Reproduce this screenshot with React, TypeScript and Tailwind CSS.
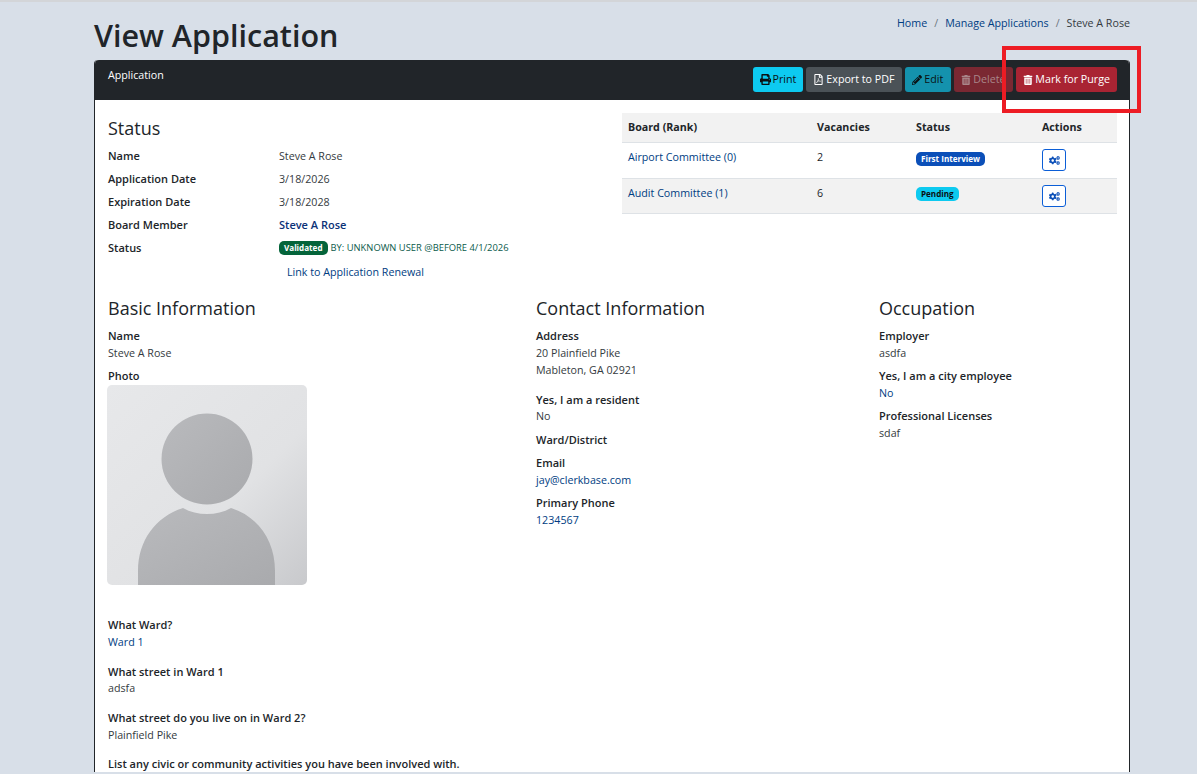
import React from "react";
import { FaPrint, FaRegFilePdf, FaPencilAlt, FaTrashAlt, FaCogs } from "react-icons/fa";

const LINK = "text-[#003d82]";

function Field({ label, value, className = "", valueClass = "" }: { label: string; value?: React.ReactNode; className?: string; valueClass?: string }) {
  return (
    <div className={className}>
      <div className="font-semibold text-[#212529] leading-[17px]">{label}</div>
      {value !== undefined && <div className={`pt-px text-[10.7px] leading-[16px] ${valueClass}`}>{value}</div>}
    </div>
  );
}

function StatusRow({ label, children }: { label: string; children: React.ReactNode }) {
  return (
    <div className="flex h-[23px] items-start leading-[17px]">
      <div className="w-[171px] font-semibold text-[#212529]">{label}</div>
      <div className="flex-1 pt-px text-[10.7px]">{children}</div>
    </div>
  );
}

function Btn({ icon, label, className }: { icon: React.ReactNode; label: string; className: string }) {
  return (
    <div className={`flex h-[25px] items-center gap-[2px] rounded-[3px] px-[7px] text-[10.7px] ${className}`}>
      {icon}
      <span>{label}</span>
    </div>
  );
}

function BoardRow({ name, vacancies, badge, badgeClass, bg, h, badgeTop }: { name: string; vacancies: string; badge: string; badgeClass: string; bg: string; h: string; badgeTop: string }) {
  return (
    <div className={`flex border-b border-[#dee2e6] ${bg} ${h}`}>
      <div className={`w-[189px] pl-[6px] pt-[6px] text-[10.7px] leading-[17px] ${LINK}`}>{name}</div>
      <div className="w-[99px] pl-[6px] pt-[6px] text-[10.7px] leading-[17px] text-[#212529]">{vacancies}</div>
      <div className={`w-[126px] pl-[6px] ${badgeTop}`}>
        <div className={`w-fit rounded-[5px] px-[5px] text-[8.1px] font-bold leading-[14px] ${badgeClass}`}>{badge}</div>
      </div>
      <div className="flex-1 pl-[6px] pt-[6px]">
        <div className="flex h-[22px] w-[24px] items-center justify-center rounded-[3px] border border-[#0b5ed7] bg-white text-[#0b4fb8]">
          <FaCogs size={11} />
        </div>
      </div>
    </div>
  );
}

function Avatar() {
  return (
    <svg width="200" height="200" viewBox="0 0 200 200" className="block rounded-[5px]">
      <defs>
        <linearGradient id="bg" x1="0" y1="0" x2="1" y2="1">
          <stop offset="0" stopColor="#e7e8ea" />
          <stop offset="0.6" stopColor="#e1e2e4" />
          <stop offset="1" stopColor="#c8c9cc" />
        </linearGradient>
        <linearGradient id="fg" x1="0" y1="0" x2="1" y2="1">
          <stop offset="0" stopColor="#b9babd" />
          <stop offset="1" stopColor="#a9aaad" />
        </linearGradient>
      </defs>
      <rect width="200" height="200" fill="url(#bg)" />
      <circle cx="100" cy="74" r="45.5" fill="url(#fg)" />
      <path d="M31 200 V186 C31 156 48 132 76 123 C 90 131 110 131 124 123 C 152 132 168 156 168 186 V200 Z" fill="url(#fg)" />
    </svg>
  );
}

export default function App() {
  return (
    <div className="relative h-[774px] w-full overflow-hidden bg-[#d8dfe8] text-[11px] text-[#343a40]" style={{ fontFamily: '"Open Sans", "Noto Sans", sans-serif' }}>
      <div className="h-[2px] bg-[#d3d5d8]" />
      <div className="ml-[94px] w-[1036px]">
        <div className="flex h-[58px] items-start justify-between">
          <h1 className="mt-[13px] text-[30.5px] font-semibold leading-[40px] text-[#212529]">View Application</h1>
          <div className="mt-[14px] flex gap-[7px] text-[10.7px] leading-[15px] text-[#6c757d]">
            <span className={LINK}>Home</span>
            <span>/</span>
            <span className={LINK}>Manage Applications</span>
            <span>/</span>
            <span className="text-[#343a40]">Steve A Rose</span>
          </div>
        </div>

        <div className="rounded-t-[4px] border-x border-[#212529] bg-white">
          <div className="flex h-[40px] items-start justify-between rounded-t-[4px] bg-[#212529] pl-[13px] pr-[12px]">
            <div className="pt-[7px] text-[10.7px] leading-[16px] text-white">Application</div>
            <div className="flex items-center gap-[3px] pt-[7px]">
              <Btn className="bg-[#0dcaf0] text-[#0b1013]" icon={<FaPrint size={11} />} label="Print" />
              <Btn className="w-[96px] bg-[#4b5257] text-white" icon={<FaRegFilePdf size={11} />} label="Export to PDF" />
              <Btn className="w-[46px] bg-[#1492ad] text-[#0a1215]" icon={<FaPencilAlt size={10} />} label="Edit" />
              <Btn className="w-[59px] overflow-hidden bg-[#7a2832] text-[#a9868a]" icon={<FaTrashAlt size={10} />} label="Delete" />
              <Btn className="bg-[#a92433] text-white" icon={<FaTrashAlt size={10} />} label="Mark for Purge" />
            </div>
          </div>

          <div className="flex pl-[13px] pr-[12px] pt-[13px]">
            <div className="w-[514px]">
              <h2 className="mb-[7px] mt-[3px] text-[18px] font-normal leading-[24px] text-[#212529]">Status</h2>
              <StatusRow label="Name">Steve A Rose</StatusRow>
              <StatusRow label="Application Date">3/18/2026</StatusRow>
              <StatusRow label="Expiration Date">3/18/2028</StatusRow>
              <StatusRow label="Board Member"><span className="-mt-px block text-[11px] font-semibold text-[#0b3278]">Steve A Rose</span></StatusRow>
              <StatusRow label="Status">
                <span className="-mt-px flex items-center gap-[3px]">
                  <span className="rounded-[5px] bg-[#04643a] px-[5px] text-[8.1px] font-bold leading-[14px] text-white">Validated</span>
                  <span className="text-[9.4px] text-[#0a5a4a]">BY: UNKNOWN USER @BEFORE 4/1/2026</span>
                </span>
              </StatusRow>
              <div className={`pl-[179px] pt-[2px] text-[10.7px] leading-[17px] ${LINK}`}>Link to Application Renewal</div>
            </div>
            <div className="w-[495px]">
              <div className="flex h-[30px] border-b border-[#dee2e6] bg-[#f2f2f2] text-[10.7px] font-bold leading-[17px] text-[#212529]">
                <div className="w-[189px] pl-[6px] pt-[6px]">Board (Rank)</div>
                <div className="w-[99px] pl-[6px] pt-[6px]">Vacancies</div>
                <div className="w-[126px] pl-[6px] pt-[6px]">Status</div>
                <div className="flex-1 pl-[6px] pt-[6px]">Actions</div>
              </div>
              <BoardRow name="Airport Committee (0)" vacancies="2" badge="First Interview" badgeClass="bg-[#0b4fb8] text-white" bg="bg-white" h="h-[36px]" badgeTop="pt-[9px]" />
              <BoardRow name="Audit Committee (1)" vacancies="6" badge="Pending" badgeClass="bg-[#0dcaf0] text-[#0b1013]" bg="bg-[#f2f2f2]" h="h-[35px]" badgeTop="pt-[8px]" />
            </div>
          </div>

          <div className="flex pl-[13px] pt-[15px]">
            <div className="w-[428px]">
              <h2 className="mb-[7px] text-[18px] font-normal leading-[24px] text-[#212529]">Basic Information</h2>
              <Field label="Name" value="Steve A Rose" />
              <div className="mt-[6px] font-semibold leading-[17px] text-[#212529]">Photo</div>
              <div className="mt-[1px] -ml-px"><Avatar /></div>
              <Field className="mt-[31px]" label="What Ward?" value="Ward 1" valueClass={LINK} />
              <Field className="mt-[13px]" label="What street in Ward 1" value="adsfa" valueClass="-mt-px" />
              <Field className="mt-[13px]" label="What street do you live on in Ward 2?" value="Plainfield Pike" />
              <Field className="mt-[12px]" label="List any civic or community activities you have been involved with." />
            </div>
            <div className="w-[343px]">
              <h2 className="mb-[7px] text-[18px] font-normal leading-[24px] text-[#212529]">Contact Information</h2>
              <Field label="Address" value={<><div>20 Plainfield Pike</div><div className="leading-[18px]">Mableton, GA 02921</div></>} />
              <Field className="mt-[12px]" label="Yes, I am a resident" value="No" valueClass="-mt-px" />
              <Field className="mt-[7px]" label="Ward/District" />
              <Field className="mt-[6px]" label="Email" value="jay@clerkbase.com" valueClass={LINK} />
              <Field className="mt-[6px]" label="Primary Phone" value="1234567" valueClass={LINK} />
            </div>
            <div className="flex-1">
              <h2 className="mb-[7px] text-[18px] font-normal leading-[24px] text-[#212529]">Occupation</h2>
              <Field label="Employer" value="asdfa" />
              <Field className="mt-[6px]" label="Yes, I am a city employee" value="No" valueClass={LINK} />
              <Field className="mt-[6px]" label="Professional Licenses" value="sdaf" />
            </div>
          </div>
        </div>
      </div>
      <div className="absolute left-[1002px] top-[46px] h-[67px] w-[139px] border-[4px] border-[#ed1c24]" />
    </div>
  );
}
